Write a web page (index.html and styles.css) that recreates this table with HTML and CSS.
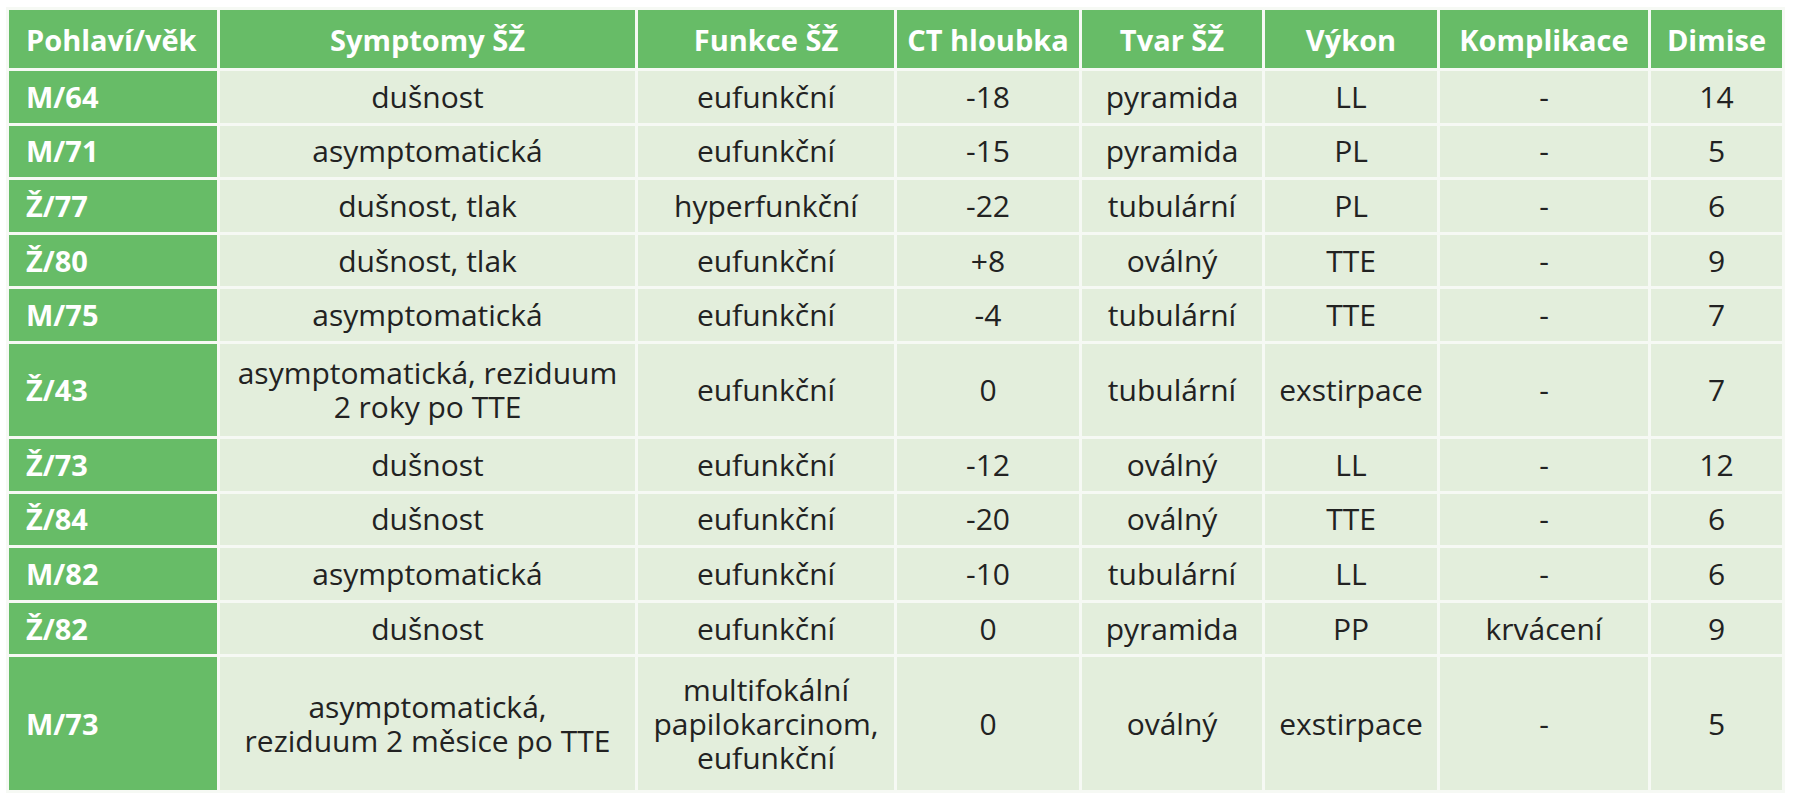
FILE: index.html
```html
<!DOCTYPE html>
<html lang="cs">
<head>
<meta charset="utf-8">
<title>Tabulka</title>
<link rel="stylesheet" href="styles.css">
</head>
<body>
<table class="tbl">
  <colgroup>
    <col class="c1"><col class="c2"><col class="c3"><col class="c4">
    <col class="c5"><col class="c6"><col class="c7"><col class="c8">
  </colgroup>
  <thead>
    <tr class="head">
      <th class="first">Pohlaví/věk</th>
      <th>Symptomy ŠŽ</th>
      <th>Funkce ŠŽ</th>
      <th>CT hloubka</th>
      <th>Tvar ŠŽ</th>
      <th>Výkon</th>
      <th>Komplikace</th>
      <th>Dimise</th>
    </tr>
  </thead>
  <tbody>
    <tr class="row">
      <th>M/64</th><td>dušnost</td><td>eufunkční</td><td>-18</td><td>pyramida</td><td>LL</td><td>-</td><td>14</td>
    </tr>
    <tr class="row">
      <th>M/71</th><td>asymptomatická</td><td>eufunkční</td><td>-15</td><td>pyramida</td><td>PL</td><td>-</td><td>5</td>
    </tr>
    <tr class="row">
      <th>Ž/77</th><td>dušnost, tlak</td><td>hyperfunkční</td><td>-22</td><td>tubulární</td><td>PL</td><td>-</td><td>6</td>
    </tr>
    <tr class="row">
      <th>Ž/80</th><td>dušnost, tlak</td><td>eufunkční</td><td>+8</td><td>oválný</td><td>TTE</td><td>-</td><td>9</td>
    </tr>
    <tr class="row">
      <th>M/75</th><td>asymptomatická</td><td>eufunkční</td><td>-4</td><td>tubulární</td><td>TTE</td><td>-</td><td>7</td>
    </tr>
    <tr class="row row-2">
      <th>Ž/43</th><td>asymptomatická, reziduum<br>2 roky po TTE</td><td>eufunkční</td><td>0</td><td>tubulární</td><td>exstirpace</td><td>-</td><td>7</td>
    </tr>
    <tr class="row">
      <th>Ž/73</th><td>dušnost</td><td>eufunkční</td><td>-12</td><td>oválný</td><td>LL</td><td>-</td><td>12</td>
    </tr>
    <tr class="row">
      <th>Ž/84</th><td>dušnost</td><td>eufunkční</td><td>-20</td><td>oválný</td><td>TTE</td><td>-</td><td>6</td>
    </tr>
    <tr class="row">
      <th>M/82</th><td>asymptomatická</td><td>eufunkční</td><td>-10</td><td>tubulární</td><td>LL</td><td>-</td><td>6</td>
    </tr>
    <tr class="row">
      <th>Ž/82</th><td>dušnost</td><td>eufunkční</td><td>0</td><td>pyramida</td><td>PP</td><td>krvácení</td><td>9</td>
    </tr>
    <tr class="row row-3">
      <th>M/73</th><td>asymptomatická,<br>reziduum 2 měsice po TTE</td><td>multifokální<br>papilokarcinom,<br>eufunkční</td><td>0</td><td>oválný</td><td>exstirpace</td><td>-</td><td>5</td>
    </tr>
  </tbody>
</table>
</body>
</html>
```

FILE: styles.css
```css
html, body {
  margin: 0;
  padding: 0;
  background: #ffffff;
}

body {
  padding: 7px 0 0 6px;
  font-family: "Open Sans", "Noto Sans", sans-serif;
}

.tbl {
  table-layout: fixed;
  width: 1776px;
  border-collapse: collapse;
  border: 1px solid #e4e9e1;
}

.c1 { width: 211px; }
.c2 { width: 418px; }
.c3 { width: 259px; }
.c4 { width: 185px; }
.c5 { width: 183px; }
.c6 { width: 175px; }
.c7 { width: 211px; }
.c8 { width: 134px; }

.tbl th,
.tbl td {
  border: 3px solid #f6f9f4;
  padding: 0 4px;
  vertical-align: middle;
}

.head {
  height: 61px;
}

.head th {
  background: #67bc67;
  color: #ffffff;
  font-weight: 700;
  font-size: 29px;
  text-align: center;
  line-height: 1.1;
  padding-top: 2px;
}

.head th.first {
  text-align: left;
  padding-left: 17px;
}

.row {
  height: 54.6px;
}

.row-2 {
  height: 95px;
}

.row-3 {
  height: 136px;
}

.row th {
  background: #67bc67;
  color: #ffffff;
  font-weight: 700;
  font-size: 29px;
  text-align: left;
  padding-left: 17px;
  line-height: 1.1;
}

.row td {
  background: #e3eedc;
  color: #222222;
  font-size: 30px;
  text-align: center;
  line-height: 34px;
}
```
